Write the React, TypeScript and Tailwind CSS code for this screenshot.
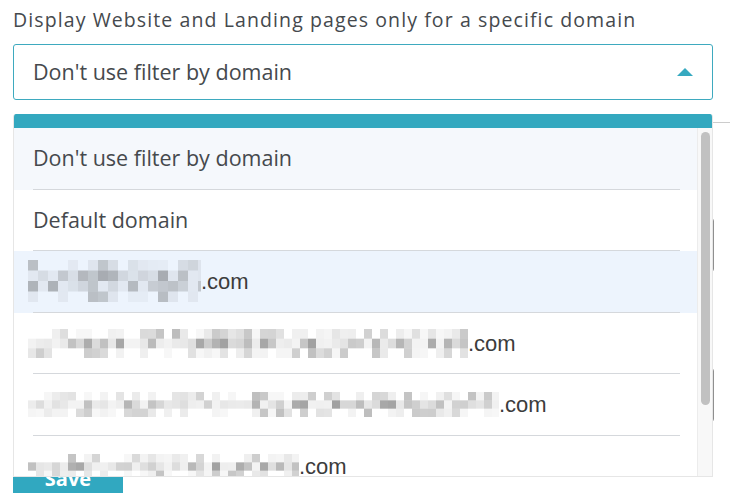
import React from 'react';

const font = { fontFamily: '"Open Sans", Lato, sans-serif' };

// deterministic pseudo random for the pixelated (redacted) domain names
function rng(seed: number) {
  let s = seed;
  return () => {
    s = (s * 9301 + 49297) % 233280;
    return s / 233280;
  };
}

function Mosaic({ width, height, seed, rows, bw }: { width: number; height: number; seed: number; rows: number; bw: number }) {
  const rand = rng(seed);
  const bh = height / rows;
  const cols = Math.ceil(width / bw);
  const cells: React.ReactNode[] = [];
  for (let r = 0; r < rows; r++) {
    const edge = r === 0 || r === rows - 1;
    for (let c = 0; c < cols; c++) {
      const v = rand();
      if (edge && v < 0.4) continue;
      const t = rand();
      const shade = 0.06 + t * t * 0.42;
      cells.push(
        <rect key={`${r}-${c}`} x={c * bw} y={r * bh} width={bw} height={bh} fill="#3a3a3a" fillOpacity={edge ? shade * 0.7 : shade} />
      );
    }
  }
  return (
    <svg width={width} height={height} className="shrink-0">
      {cells}
    </svg>
  );
}

const options = [
  { kind: 'text', label: "Don't use filter by domain", bg: 'bg-[#f5f8fc]' },
  { kind: 'text', label: 'Default domain', bg: 'bg-white' },
  { kind: 'blur', w: 173, h: 42, rows: 4, bw: 10, seed: 11, bg: 'bg-[#edf4fd]' },
  { kind: 'blur', w: 440, h: 29, rows: 3, bw: 8, seed: 27, bg: 'bg-white' },
  { kind: 'blur', w: 471, h: 25, rows: 3, bw: 8, seed: 53, bg: 'bg-white' },
  { kind: 'blur', w: 271, h: 25, rows: 3, bw: 8, seed: 71, bg: 'bg-white' },
];

export default function App() {
  return (
    <div className="relative w-[730px] h-[493px] overflow-hidden bg-white pl-[13px] pt-[6px]" style={font}>
      <label className="block text-[19.5px] leading-[28px] tracking-[1.1px] font-medium text-[#45494d]">
        Display Website and Landing pages only for a specific domain
      </label>

      <div className="relative mt-[10px] w-[700px]">
        <div className="h-[56px] border border-[#3eaabf] rounded-[3px] flex items-center justify-between pl-[19px] pr-[19px]">
          <span className="text-[21.5px] font-medium text-[#45494d]">Don't use filter by domain</span>
          <svg width="16" height="8" viewBox="0 0 16 8">
            <path d="M0 8 L8 0 L16 8 Z" fill="#36a9c0" />
          </svg>
        </div>

        {/* open dropdown menu */}
        <div className="absolute left-0 top-[70px] z-10 w-[700px] h-[363px] bg-white border-x border-b border-[#e6e6e6] rounded-t-[3px] flex flex-col overflow-hidden">
          <div className="h-[14px] bg-[#33a8bf] shrink-0 -mx-px" />
          <div className="flex flex-1 min-h-0">
            <div className="flex-1 overflow-hidden">
              {options.map((o, i) => (
                <div key={i} className={`h-[61.6px] ${o.bg}`}>
                  <div className="ml-[19px] mr-[17px] h-full border-b border-[#d5d8dc] flex items-center text-[21.5px] font-medium text-[#45494d]">
                    {o.kind === 'text' ? (
                      o.label
                    ) : (
                      <div className="flex items-center -ml-[5px]">
                        <Mosaic width={o.w!} height={o.h!} rows={o.rows!} bw={o.bw!} seed={o.seed!} />
                        <span className="text-[22px] font-normal text-[#3c3c3c]" style={{ fontFamily: '"Liberation Sans", Arial, sans-serif' }}>.com</span>
                      </div>
                    )}
                  </div>
                </div>
              ))}
            </div>
            <div className="w-[15px] shrink-0 bg-[#f8f8f8] border-l border-[#ececec] pt-[4px] flex justify-center">
              <div className="w-[9px] h-[273px] rounded-full bg-[#c1c1c1]" />
            </div>
          </div>
        </div>
      </div>

      {/* form content underneath the open menu */}
      <div className="mt-[22px] border-t border-[#cccccc]" />
      <div className="mt-[95px] w-[701px] h-[54px] border border-[#8f8f8f] rounded-[3px]" />
      <div className="mt-[96px] w-[701px] h-[54px] border border-[#8f8f8f] rounded-[3px]" />
      <button className="mt-[35px] w-[110px] h-[44px] bg-[#31a8c0] text-white text-[20px] font-bold">Save</button>
    </div>
  );
}
